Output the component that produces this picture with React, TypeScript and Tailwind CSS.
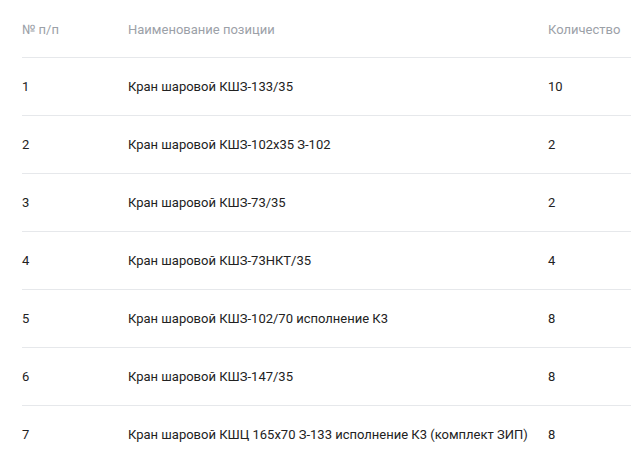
const rows: [string, string, string][] = [
  ['1', 'Кран шаровой КШЗ-133/35', '10'],
  ['2', 'Кран шаровой КШЗ-102x35 З-102', '2'],
  ['3', 'Кран шаровой КШЗ-73/35', '2'],
  ['4', 'Кран шаровой КШЗ-73НКТ/35', '4'],
  ['5', 'Кран шаровой КШЗ-102/70 исполнение К3', '8'],
  ['6', 'Кран шаровой КШЗ-147/35', '8'],
  ['7', 'Кран шаровой КШЦ 165x70 З-133 исполнение К3 (комплект ЗИП)', '8'],
]

export default function App() {
  return (
    <div className="min-h-screen bg-white pl-[22px] font-['Roboto',sans-serif] text-[13px]">
      {/* Header */}
      <div className="grid h-[58px] grid-cols-[106px_420px_1fr] items-center border-b border-[#e6e8eb] pt-[3px] text-[#9ca1a8]">
        <div>№ п/п</div>
        <div>Наименование позиции</div>
        <div>Количество</div>
      </div>

      {rows.map(([n, name, qty]) => (
        <div
          key={n}
          className="grid h-[58px] grid-cols-[106px_420px_1fr] items-center border-b border-[#e6e8eb] text-[#222]"
        >
          <div>{n}</div>
          <div className="whitespace-nowrap">{name}</div>
          <div>{qty}</div>
        </div>
      ))}
    </div>
  )
}
